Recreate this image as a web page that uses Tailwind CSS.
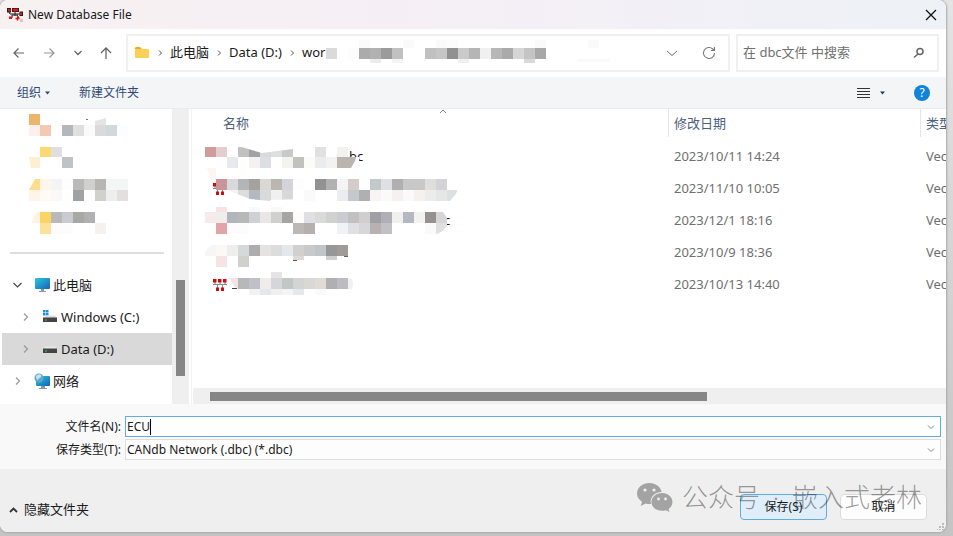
<!DOCTYPE html>
<html lang="zh-CN">
  <head>
    <meta charset="UTF-8" />
    <meta name="viewport" content="width=device-width, initial-scale=1.0" />
    <script src="https://cdn.jsdelivr.net/npm/@tailwindcss/browser@4"></script>
    <title>New Database File</title>
  </head>

  <body
    class="flex min-h-screen bg-linear-to-b from-[#e4e4e4] to-[#c4c4c4] pr-[7px] pb-1 font-['Noto_Sans','Noto_Sans_CJK_SC',sans-serif] text-[13px] text-[#1a1a1a]"
  >
    <div class="relative flex min-w-0 flex-1 flex-col overflow-hidden rounded-lg bg-white shadow-[0_0_2px_1px_#a8a8a8]">
      <!-- Title bar -->
      <header
        class="flex h-[29px] items-center bg-linear-to-r from-[#f7f1f2] via-[#f5eff6] to-[#edf2f7] pr-2 pl-[7px] text-xs"
      >
        <svg class="mr-[5px]" width="16" height="14" viewBox="0 0 16 14">
          <path d="M2 4l1 2h10l1-2M8 3v5M5 7h6M5 7v3M10 7l2 3" stroke="#222" fill="none" />
          <path d="M0 0h4v4.500H0zM5 0h7v4H5zM12.500 3.500H16V8h-3.500z" fill="#222" />
          <path d="M1 1h2.500v2.500H1zM6 .8h5v2.400H6zM13 4.500h2v2.500h-2zM2 8.500h3V11H2z" fill="#f01010" />
          <path d="M8.500 10.500h4M10.500 8.500v4" stroke="#f01010" stroke-width="1.300" />
          <path d="M13 11h3v3h-3z" fill="#f9b9bd" />
        </svg>
        <h1 class="flex-1">New Database File</h1>
        <button aria-label="关闭">
          <svg width="14" height="14" viewBox="0 0 14 14" stroke="#111" stroke-width="1.300">
            <path d="M2 2l10 10M12 2L2 12" />
          </svg>
        </button>
      </header>

      <!-- Address bar -->
      <div class="flex h-12 items-center pr-[7px] pl-3">
        <nav class="flex w-[114px] items-center justify-between pr-[13px]">
          <button aria-label="后退">
            <svg width="14" height="14" viewBox="0 0 14 14" fill="none" stroke="#666" stroke-width="1.200">
              <path d="M12 7H2.500M6.500 2.500L2 7l4.500 4.500" />
            </svg>
          </button>
          <button aria-label="前进">
            <svg width="14" height="14" viewBox="0 0 14 14" fill="none" stroke="#999" stroke-width="1.200">
              <path d="M2 7h9.500M7.500 2.500L12 7l-4.500 4.500" />
            </svg>
          </button>
          <button aria-label="最近">
            <svg width="10" height="10" viewBox="0 0 10 10" fill="none" stroke="#666" stroke-width="1.300">
              <path d="M1.500 3L5 6.500 8.500 3" />
            </svg>
          </button>
          <button aria-label="上移">
            <svg width="14" height="14" viewBox="0 0 14 14" fill="none" stroke="#666" stroke-width="1.300">
              <path d="M7 13V2M2 7l5-5 5 5" />
            </svg>
          </button>
        </nav>

        <div class="relative flex h-[38px] flex-1 items-center border-2 border-[#f0f0f0] pr-3 pl-1.5">
          <svg width="16" height="14" viewBox="0 0 16 14">
            <path d="M1 2.500Q1 1 2 1h4l2 2H1z" fill="#f0a91c" />
            <path d="M1 3.500Q1 3 2 3h12q1 0 1 1v7q0 1-1 1H2q-1 0-1-1z" fill="#fccf57" />
          </svg>
          <svg class="mx-[6px]" width="8" height="8" viewBox="0 0 8 8" fill="none" stroke="#555">
            <path d="M3 1.500L5.500 4 3 6.500" />
          </svg>
          <a href="#">此电脑</a>
          <svg class="mx-[6px]" width="8" height="8" viewBox="0 0 8 8" fill="none" stroke="#555">
            <path d="M3 1.500L5.500 4 3 6.500" />
          </svg>
          <a href="#">Data (D:)</a>
          <svg class="mx-[6px]" width="8" height="8" viewBox="0 0 8 8" fill="none" stroke="#555">
            <path d="M3 1.500L5.500 4 3 6.500" />
          </svg>
          <a href="#">wor</a>
          <svg class="absolute top-1 left-[198px]" width="291" height="26" data-mosaic="path"></svg>
          <div class="ml-auto flex items-center gap-6">
            <button aria-label="展开">
              <svg width="12" height="12" viewBox="0 0 12 12" fill="none" stroke="#777">
                <path d="M1 4l5 4.500L11 4" />
              </svg>
            </button>
            <button aria-label="刷新">
              <svg width="14" height="14" viewBox="0 0 14 14" fill="none" stroke="#777" stroke-width="1.100">
                <path d="M12.500 7A5.500 5.500 0 1 1 10.800 3l1.400 1.300M12.500 1v3.500H9" />
              </svg>
            </button>
          </div>
        </div>

        <div class="ml-[6px] flex h-[38px] w-[203px] items-center border-2 border-[#f0f0f0] pr-3 pl-[5px]">
          <input
            type="search"
            aria-label="搜索"
            placeholder="在 dbc文件 中搜索"
            class="min-w-0 flex-1 outline-none placeholder:text-[#707070]"
          />
          <svg width="12" height="12" viewBox="0 0 12 12" fill="none" stroke="#666" stroke-width="1.500">
            <circle cx="7" cy="4.500" r="3" />
            <path d="M5 7l-4 3.500" />
          </svg>
        </div>
      </div>

      <!-- Toolbar -->
      <div class="flex h-8 items-center border-b border-[#e9ebee] bg-[#f4f5f7] pr-4 pl-[17px] text-xs text-[#2f4a75]">
        <button class="flex items-center gap-1">
          组织
          <svg width="6" height="4" viewBox="0 0 6 4" fill="#2f4a75"><path d="M0 .5h5L2.500 3.500z" /></svg>
        </button>
        <button class="ml-7">新建文件夹</button>
        <button class="mr-[28px] ml-auto flex items-center gap-2.5" aria-label="视图">
          <svg width="13" height="12" viewBox="0 0 13 12" stroke="#333" stroke-width="1">
            <path d="M0 1.500h13M0 4.500h13M0 7.500h13M0 10.500h13" />
          </svg>
          <svg width="6" height="4" viewBox="0 0 6 4" fill="#1f3a68"><path d="M0 .5h5L2.500 3.500z" /></svg>
        </button>
        <button class="size-4 rounded-full bg-[#1084d8] leading-4 text-white">?</button>
      </div>

      <!-- Folder tree and file list -->
      <main class="flex flex-1">
        <aside class="w-[172px] shrink-0">
          <svg class="block" width="172" height="143" data-mosaic="side"></svg>
          <hr class="mr-2 ml-2.5 border-t-2 border-[#dedede]" />
          <ul class="mt-[15px] leading-8">
            <li class="flex h-8 items-center pl-3">
              <svg class="mr-3" width="11" height="10" viewBox="0 0 11 10" fill="none" stroke="#444" stroke-width="1.200">
                <path d="M1.500 3l4 4 4-4" />
              </svg>
              <svg class="mr-[3px]" width="15" height="14" viewBox="0 0 15 14">
                <defs>
                  <linearGradient id="screen" x2="1" y2="1">
                    <stop stop-color="#2cc8dc" />
                    <stop offset="1" stop-color="#1263b8" />
                  </linearGradient>
                </defs>
                <path d="M6 11h3v2h2v1H4v-1h2z" fill="#8b98a5" />
                <rect width="15" height="11" rx="1" fill="url(#screen)" />
              </svg>
              此电脑
            </li>
            <li class="flex h-8 items-center pl-5">
              <svg class="mr-3" width="11" height="10" viewBox="0 0 11 10" fill="none" stroke="#999" stroke-width="1.200">
                <path d="M4 1.500L7.500 5 4 8.500" />
              </svg>
              <svg class="mr-1" width="14" height="14" viewBox="0 0 14 14">
                <path d="M0 0h2.500v2.500H0zM3 0h2.500v2.500H3zM0 3h2.500v2.500H0zM3 3h2.500v2.500H3z" fill="#1a8ee0" />
                <path d="M2 7l1-1.500h9L14 8H0z" fill="#e0e0e0" />
                <path d="M0 7.500h14V12H0z" fill="#444" />
                <path d="M2 9.500h2v1H2z" fill="#3fc34a" />
              </svg>
              Windows (C:)
            </li>
            <li class="ml-0.5 flex h-8 items-center bg-[#d9d9d9] pl-[18px]">
              <svg class="mr-3" width="11" height="10" viewBox="0 0 11 10" fill="none" stroke="#999" stroke-width="1.200">
                <path d="M4 1.500L7.500 5 4 8.500" />
              </svg>
              <svg class="mr-1" width="14" height="14" viewBox="0 0 14 14">
                <path d="M0 7l2-2.500h10L14 7z" fill="#e8e8e8" />
                <path d="M0 6.500h14V11H0z" fill="#444" />
                <path d="M2 8.500h2v1H2z" fill="#3fc34a" />
              </svg>
              Data (D:)
            </li>
            <li class="flex h-8 items-center pl-3">
              <svg class="mr-[11px]" width="11" height="10" viewBox="0 0 11 10" fill="none" stroke="#999" stroke-width="1.200">
                <path d="M4 1.500L7.500 5 4 8.500" />
              </svg>
              <svg class="mr-[3px]" width="16" height="16" viewBox="0 0 16 16">
                <path d="M7 13h4v2h2v1H5v-1h2z" fill="#8b98a5" />
                <rect x="2" y="3" width="14" height="10" rx="1" fill="url(#screen)" />
                <circle cx="5" cy="5" r="4.500" fill="#5fa8cc" />
                <path d="M2 3q3-3 5-1 1 2-1 3-2 0-2 2-2 0-2-4z" fill="#c3e2ee" />
              </svg>
              网络
            </li>
          </ul>
        </aside>
        <div class="flex w-[17px] shrink-0 flex-col items-center bg-[#efefef] pt-[171px]">
          <div class="h-24 w-[9px] bg-[#868686]"></div>
        </div>

        <section class="relative ml-0.5 flex min-w-0 flex-1 flex-col border-l border-[#f2f2f2] pl-px">
          <svg class="absolute top-0 left-[247px]" width="8" height="5" viewBox="0 0 8 5" fill="none" stroke="#888">
            <path d="M1 4l3-3 3 3" />
          </svg>
          <table class="w-full table-fixed whitespace-nowrap">
            <colgroup>
              <col />
              <col class="w-[252px]" />
              <col class="w-[26px]" />
            </colgroup>
            <thead class="text-left text-[#4c607f]">
              <tr class="h-8 align-top leading-7">
                <th class="pl-[30px] font-normal">名称</th>
                <th class="font-normal"><div class="h-7 border-l border-[#e6e6e6] pl-[5px]">修改日期</div></th>
                <th class="overflow-hidden font-normal"><div class="h-7 border-l border-[#e6e6e6] pl-[5px]">类型</div></th>
              </tr>
            </thead>
            <tbody class="text-[#707070]">
              <tr class="h-8">
                <td class="pl-[156px] text-[#1a1a1a]">bc</td>
                <td class="pl-[6px]">2023/10/11 14:24</td>
                <td class="overflow-hidden pl-[6px]">Vector</td>
              </tr>
              <tr class="h-8">
                <td class="pl-5">
                  <svg width="14" height="13" viewBox="0 0 14 13">
                    <path d="M0 5.500h14M2 3v3M7 3v3M12 3v3M4.500 6v3M9.500 6v3" stroke="#888" />
                    <path d="M0 0h3.500v3.500H0zM5 0h3.500v3.500H5zM10 0h3.500v3.500H10zM3 8.500h3V12H3zM8 8.500h3V12H8z" fill="#d00d0d" />
                  </svg>
                </td>
                <td class="pl-[6px]">2023/11/10 10:05</td>
                <td class="overflow-hidden pl-[6px]">Vector</td>
              </tr>
              <tr class="h-8">
                <td class="pl-[251px] text-[#1a1a1a]">c</td>
                <td class="pl-[6px]">2023/12/1 18:16</td>
                <td class="overflow-hidden pl-[6px]">Vector</td>
              </tr>
              <tr class="h-8">
                <td></td>
                <td class="pl-[6px]">2023/10/9 18:36</td>
                <td class="overflow-hidden pl-[6px]">Vector</td>
              </tr>
              <tr class="h-8">
                <td class="pl-5">
                  <svg width="14" height="13" viewBox="0 0 14 13">
                    <path d="M0 5.500h14M2 3v3M7 3v3M12 3v3M4.500 6v3M9.500 6v3" stroke="#888" />
                    <path d="M0 0h3.500v3.500H0zM5 0h3.500v3.500H5zM10 0h3.500v3.500H10zM3 8.500h3V12H3zM8 8.500h3V12H8z" fill="#d00d0d" />
                  </svg>
                </td>
                <td class="pl-[6px]">2023/10/13 14:40</td>
                <td class="overflow-hidden pl-[6px]">Vector</td>
              </tr>
            </tbody>
          </table>
          <svg class="absolute top-8 left-[13px]" width="252" height="160" data-mosaic="files"></svg>
          <div class="mt-auto flex h-4 items-center bg-[#efefef] pl-[17px]">
            <div class="h-[9px] w-[67.5%] bg-[#868686]"></div>
          </div>
        </section>
      </main>

      <!-- File name and type -->
      <form class="flex flex-col gap-0.5 bg-[#f9f9f9] pt-3 pr-[5px] pb-[9px] text-xs">
        <div class="flex items-center">
          <label for="filename" class="w-[125px] pr-1 text-right">文件名(N):</label>
          <div class="flex h-[21px] flex-1 items-center border border-[#62abe3] bg-white pr-[5px] pl-px">
            <input id="filename" type="text" value="ECU" class="field-sizing-content outline-none" />
            <span class="h-4 w-px bg-black"></span>
            <svg class="ml-auto" width="8" height="8" viewBox="0 0 8 8" fill="none" stroke="#888">
              <path d="M1 2.500l3 3 3-3" />
            </svg>
          </div>
        </div>
        <div class="flex items-center">
          <label for="filetype" class="w-[125px] pr-1 text-right">保存类型(T):</label>
          <div class="flex h-[21px] flex-1 items-center border border-[#dedede] bg-[#fdfdfd] pr-[5px] pl-px">
            <select id="filetype" class="flex-1 appearance-none outline-none">
              <option>CANdb Network (.dbc) (*.dbc)</option>
            </select>
            <svg width="8" height="8" viewBox="0 0 8 8" fill="none" stroke="#888">
              <path d="M1 2.500l3 3 3-3" />
            </svg>
          </div>
        </div>
      </form>

      <!-- Footer -->
      <footer class="relative flex h-[63px] bg-[#efefef] pt-[25px] pr-[19px] pl-[9px]">
        <button class="flex h-8 items-center gap-1.5">
          <svg width="9" height="8" viewBox="0 0 9 8" fill="none" stroke="#333" stroke-width="1.800">
            <path d="M1 6l3.500-3.500L8 6" />
          </svg>
          隐藏文件夹
        </button>
        <button class="ml-auto h-[26px] w-[87px] rounded-sm border border-[#62abe3] bg-[#e0eef9] text-xs">保存(S)</button>
        <button class="ml-[13px] h-[26px] w-[87px] rounded-sm border border-[#dcdcdc] bg-[#fdfdfd] text-xs">取消</button>

        <!-- Account watermark -->
        <div class="pointer-events-none absolute top-2 right-6 flex items-center gap-[9px] text-[26px] leading-[40px] font-light whitespace-nowrap text-black/40">
          <svg width="36" height="30" viewBox="0 0 36 30">
            <path
              d="M12.500 1C5.500 1 0 5.500 0 11.500c0 3.500 2 6.300 5 8.200L3.800 24l4.700-2.600q2.500.7 5.500.5C12.500 15.500 17.500 10 24.700 10 23.500 4.500 18.500 1 12.500 1z"
              fill="#a3a3a3"
            />
            <path
              d="M25 11c-6 0-10.500 4-10.500 9s4.500 8.800 10.500 8.800q2 0 3.800-.5L32.500 30l-1-3c2.300-1.600 4-4 4-7 0-5-4.500-9-10.500-9z"
              fill="#a3a3a3"
            />
            <g fill="#efefef">
              <circle cx="8" cy="8" r="1.600" />
              <circle cx="17" cy="8" r="1.600" />
              <circle cx="21.500" cy="17" r="1.400" />
              <circle cx="28.500" cy="17" r="1.400" />
            </g>
          </svg>
          <p class="flex">
            <span>公众号</span>
            <span class="w-8 text-center">·</span>
            <span>嵌入式老林</span>
          </p>
        </div>
        <svg class="absolute right-0.5 bottom-0.5" width="7" height="7" viewBox="0 0 7 7" fill="#bbb">
          <path d="M5 0h2v2H5zM5 3h2v2H5zM2 3h2v2H2zM5 6h2v1H5zM2 6h2v1H2zM0 6h1v1H0z" />
        </svg>
      </footer>
    </div>

    <script>
      // Each run: x, y, height, then one colour per 11px cell ("-" leaves a cell empty)
      const mosaics = {
        path: [
          [0, 8, 11, "dadada - fcfcfc ababab b1b1b1 9b9b9b c1c1c1"],
          [99, 8, 11, "c1c1c1 c6c6c6 919191 cacaca b5b5b5 f0f0f0 b7b7b7 aaaaaa d6d6d6 c4c4c4 a8a8a8"],
          [33, 0, 8, "fafafa - - - fafafa - - fafafa fcfcfc - - - - - - - fafafa"],
          [44, 19, 4, "ececec - f4f4f4 - - - - - f0f0f0 - - - - - dadada"],
          [251, 19, 3, "fafafa fafafa fafafa"],
          [262, 0, 8, "fafafa"],
        ],
        side: [
          [29, 5, 11, "ecb56c"],
          [29, 16, 11, "fcf0ef f3c9b1 - b6b7bc e0e0e0 fafafa dadada d3d8d8 fbfefe"],
          [40, 38, 10, "fdd973 dfdfdf"],
          [29, 48, 11, "fdefcf - - c1c2c6"],
          [29, 70, 11, "fddc8b fef6ea f4f4f5 fdfdfd b9b9b9 d0d0ce b7b6b5 f4f6f6 f3f6f5"],
          [29, 81, 11, "fdf5e8 fefbf5 f9f9f9 - a0a1a3 fcfcfc d0d0ce eeeeee e1e0de"],
          [29, 103, 11, "fef4e0 fbd468 b9b9b9 cacbd2 a8a8a5 b1b1b4"],
          [40, 114, 11, "fde09a fcfcfc fcfcfc - - f4f2f1"],
        ],
        files: [
          [0, 6, 10, "d09b9b e4cdcf - c0c1c0 a0a2a5 d9dadb dddee0 c9c9c8 - - e0e1e1 - f3f2f1"],
          [0, 16, 11, "- fefefe e8e9ed - f3f2f0 dcdee4 - f3f3f2 c1c1bf fbfbf9 ebecee f3f2f0 bbb5b0 bbb5b0"],
          [0, 27, 11, "fbf5f4"],
          [0, 38, 11, "- c99598 d7d9dd b3b5b9 a5a19d dad8d5 bcb6b1 d2d4d8 fdfdfd - 929193 b1b1b1 f4f4f4 d3ccca - c3c8c8 dfe0e4 b0b0b1 c8c8c9 c8c8c9 e0dedc d2d2d7"],
          [0, 49, 11, "- - f4f4f4 dcdcdc b5b8c0 dadada f1f0f0 d8d8d8 - fafafa - - ebecf0 c7c8cd b0b0b3 f6f5f3 fafafa f3f2f0 fafafa f3f2f0 ececed e4e7e6 dedfe0"],
          [11, 66, 5, "f9e2e2 - - f9f9f9 - f9f9f9"],
          [0, 71, 11, "f7eaea efeeec b1b6bb b6b9b8 d0d1d4 eae6e5 d0d0ce a8a6a4 fdfcfa dfe0e3 dbdadb d0d2cf cbccd0 c1c1c2 d0cfcd 9f9fa4 b0afb5 f0f0f1 b4b8bf f3f2ee 96918f d6d6d8"],
          [0, 82, 11, "- e0a5a6 fcfcfc fcfcfc - - - - bcb8b6 b5b0af - - f1f2f5 e0dfe1 d6d7d9 b7b1b1 c1c0c2 - - - fafafa e0e0e0"],
          [0, 104, 11, "f6f6f6 faf9f8 eeeeed d6d8d9 adadad e4e3e2 dcdcdb e4e8ec d2d0ce c9c9c9 c2c5c8 969799 a09a98"],
          [0, 115, 11, "- f4e4e4 - d0d0ce"],
          [88, 115, 4, "dcd9d6 - - cfcfd0"],
          [66, 131, 6, "e4e4e4"],
          [33, 137, 11, "b7b8ba c0c1c8 eeedeb d6d6d8 c3c6c4 d4d4d5 dad7d7 e0dcd5 b0afb1 bcbbc1"],
          [44, 148, 6, "f2f2f1 e6e7e8 f0f0f0 f4f4f4 e6e8ec - fafafa"],
        ],
      };

      // Slanted and rounded edges: fill, points
      const edges = {
        path: [],
        side: [
          ["e4e4e4", "95,12 106,9 106,16 95,16"],
          ["777777", "86,10 88,10 88,11 86,11"],
          ["ffffff", "29,48 31,59 29,59"],
          ["ffffff", "29,70 35,70 29,81"],
          ["ffffff", "29,103 37,103 34,106 32,114 29,114"],
        ],
        files: [
          ["ffffff", "33,5 57,12 88,8 88,5"],
          ["ffffff", "0,27 2,27 5,38 0,38"],
          ["ffffff", "151,16 154,16 154,27 146,27 150,20"],
          ["ffffff", "22,49 45,58 65,60 22,60"],
          ["ffffff", "65,60 65,59 99,58 99,60"],
          ["ffffff", "253,49 250,54 245,60 253,60"],
          ["ffffff", "238,71 242,77 242,71"],
          ["ffffff", "242,85 238,90 232,93 242,93"],
          ["ffffff", "0,104 6,104 2,108 0,112"],
          ["f0e4e4", "24,137 33,137 33,148 29,145"],
          ["eff0f0", "143,137 147,138 148,142 147,148 143,148"],
          ["444444", "27,147 32,147 32,148 27,148"],
          ["555555", "88,119 92,119 92,120 88,120"],
          ["666666", "139,115 143,115 143,116 139,116"],
        ],
      };

      document.querySelectorAll("[data-mosaic]").forEach((svg) => {
        const name = svg.dataset.mosaic;
        let shapes = "";
        for (const [x, y, h, cells] of mosaics[name]) {
          cells.split(" ").forEach((color, i) => {
            if (color === "-") return;
            shapes += `<rect x="${x + i * 11}" y="${y}" width="11" height="${h}" fill="#${color}" />`;
          });
        }
        for (const [color, points] of edges[name]) {
          shapes += `<polygon points="${points}" fill="#${color}" />`;
        }
        svg.innerHTML = shapes;
      });
    </script>
  </body>
</html>
